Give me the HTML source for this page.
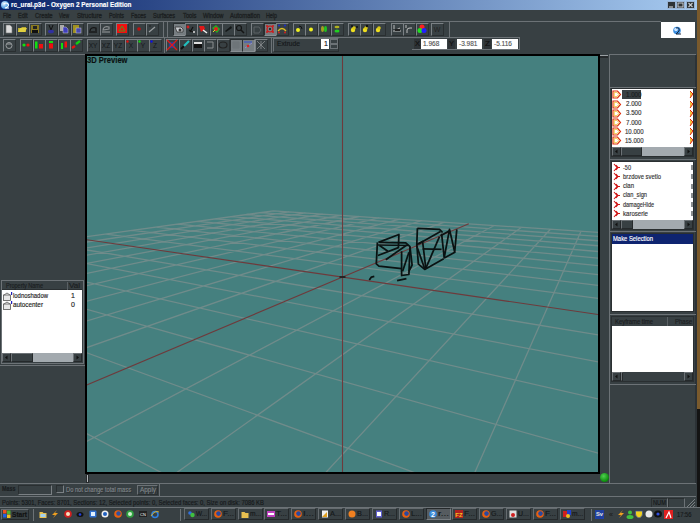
<!DOCTYPE html>
<html><head><meta charset="utf-8"><style>*{margin:0;padding:0;box-sizing:border-box}
html,body{width:700px;height:523px;overflow:hidden;background:#384043;font-family:"Liberation Sans",sans-serif;position:relative}
.a{position:absolute}
.t{position:absolute;white-space:nowrap;-webkit-text-stroke:0.15px currentColor}
.btn{position:absolute;width:13px;height:13px;border-left:1px solid #7a8084;border-top:1px solid #7a8084;border-right:1px solid #2a2f31;border-bottom:1px solid #2a2f31}
.pr{background:#767d81;border-left-color:#2a2f31;border-top-color:#2a2f31;border-right-color:#8a9094;border-bottom-color:#8a9094}
svg{overflow:visible}</style></head><body>
<div class="a" style="left:697px;top:0px;width:3px;height:409px;background:#7a5a2c;"></div>
<div class="a" style="left:697px;top:409px;width:3px;height:99px;background:#141414;"></div>
<div class="a" style="left:0px;top:0px;width:697px;height:10px;background:linear-gradient(90deg,#0a246a,#a6caf0);"></div>
<div class="a" style="left:1px;top:1px;width:8px;height:8px;background:radial-gradient(circle at 35% 35%,#e8f4ff,#4a9ae0 60%,#1a4a98);border-radius:50%"></div>
<svg class="a" style="left:1px;top:1px" width="9" height="9" viewBox="0 0 9 9"><path d="M3 3q2-2 4 0t-3 4h4" stroke="#fff" stroke-width="1.1" fill="none"/></svg>
<div class="t" style="left:10.5px;top:1.01px;font-size:7px;line-height:8px;font-weight:bold;color:#ffffff;transform:scaleX(0.908);transform-origin:0 0;">rc_ural.p3d - Oxygen 2 Personal Edition</div>
<div class="a" style="left:667px;top:1px;width:9px;height:8px;background:#2e3336;border:1px solid #9ab4d4"></div>
<div class="a" style="left:676px;top:1px;width:9px;height:8px;background:#2e3336;border:1px solid #9ab4d4"></div>
<div class="a" style="left:686px;top:1px;width:9px;height:8px;background:#2e3336;border:1px solid #9ab4d4"></div>
<svg class="a" style="left:667px;top:1px" width="9" height="8" viewBox="0 0 9 8"><path d="M2 6h4" stroke="#c8ccd0" stroke-width="1.2"/></svg>
<svg class="a" style="left:676px;top:1px" width="9" height="8" viewBox="0 0 9 8"><rect x="2" y="2" width="5" height="4" fill="none" stroke="#c8ccd0" stroke-width="1"/></svg>
<svg class="a" style="left:686px;top:1px" width="9" height="8" viewBox="0 0 9 8"><path d="M2.5 2l4 4M6.5 2l-4 4" stroke="#c8ccd0" stroke-width="1.1"/></svg>
<div class="t" style="left:3px;top:11.61px;font-size:7px;line-height:8px;color:#1c2022;transform:scaleX(0.709);transform-origin:0 0;-webkit-text-stroke:0.35px #1c2022">File</div>
<div class="t" style="left:18px;top:11.61px;font-size:7px;line-height:8px;color:#1c2022;transform:scaleX(0.788);transform-origin:0 0;-webkit-text-stroke:0.35px #1c2022">Edit</div>
<div class="t" style="left:34.5px;top:11.61px;font-size:7px;line-height:8px;color:#1c2022;transform:scaleX(0.833);transform-origin:0 0;-webkit-text-stroke:0.35px #1c2022">Create</div>
<div class="t" style="left:59px;top:11.61px;font-size:7px;line-height:8px;color:#1c2022;transform:scaleX(0.665);transform-origin:0 0;-webkit-text-stroke:0.35px #1c2022">View</div>
<div class="t" style="left:77px;top:11.61px;font-size:7px;line-height:8px;color:#1c2022;transform:scaleX(0.880);transform-origin:0 0;-webkit-text-stroke:0.35px #1c2022">Structure</div>
<div class="t" style="left:109px;top:11.61px;font-size:7px;line-height:8px;color:#1c2022;transform:scaleX(0.771);transform-origin:0 0;-webkit-text-stroke:0.35px #1c2022">Points</div>
<div class="t" style="left:131px;top:11.61px;font-size:7px;line-height:8px;color:#1c2022;transform:scaleX(0.787);transform-origin:0 0;-webkit-text-stroke:0.35px #1c2022">Faces</div>
<div class="t" style="left:153px;top:11.61px;font-size:7px;line-height:8px;color:#1c2022;transform:scaleX(0.796);transform-origin:0 0;-webkit-text-stroke:0.35px #1c2022">Surfaces</div>
<div class="t" style="left:182.5px;top:11.61px;font-size:7px;line-height:8px;color:#1c2022;transform:scaleX(0.826);transform-origin:0 0;-webkit-text-stroke:0.35px #1c2022">Tools</div>
<div class="t" style="left:202.5px;top:11.61px;font-size:7px;line-height:8px;color:#1c2022;transform:scaleX(0.823);transform-origin:0 0;-webkit-text-stroke:0.35px #1c2022">Window</div>
<div class="t" style="left:230px;top:11.61px;font-size:7px;line-height:8px;color:#1c2022;transform:scaleX(0.847);transform-origin:0 0;-webkit-text-stroke:0.35px #1c2022">Automation</div>
<div class="t" style="left:266px;top:11.61px;font-size:7px;line-height:8px;color:#1c2022;transform:scaleX(0.764);transform-origin:0 0;-webkit-text-stroke:0.35px #1c2022">Help</div>
<div class="a" style="left:0px;top:21px;width:661px;height:1px;background:#6c7276;"></div>
<div class="a" style="left:0px;top:37px;width:449px;height:1px;background:#6c7276;"></div>
<div class="a" style="left:449px;top:21px;width:1px;height:16px;background:#6c7276;"></div>
<div class="a" style="left:661px;top:22px;width:34px;height:16px;background:#ffffff;"></div>
<svg class="a" style="left:672px;top:25px" width="12" height="10" viewBox="0 0 12 10"><circle cx="5" cy="5.5" r="3.8" fill="#3b8ee0"/><circle cx="4" cy="4.5" r="1.8" fill="#cfe6ff"/><path d="M4 3q4-1 3 3l-3 3h5" stroke="#1a2a40" stroke-width="1" fill="none"/></svg>
<div class="a" style="left:0px;top:54px;width:86px;height:1px;background:#6c7276;"></div>
<div class="btn" style="left:3px;top:23px"></div>
<svg class="a" style="left:3px;top:23px" width="12" height="12" viewBox="0 0 12 12"><path d="M3 2h4l2 2v6H3z" fill="#dcdcdc" stroke="#777" stroke-width="0.6"/></svg>
<div class="btn" style="left:16px;top:23px"></div>
<svg class="a" style="left:16px;top:23px" width="12" height="12" viewBox="0 0 12 12"><path d="M2 5h3l1-1h4v5H2z" fill="#b8a830"/><path d="M2 9l2-4h7l-2 4z" fill="#e0d040"/></svg>
<div class="btn" style="left:29px;top:23px"></div>
<svg class="a" style="left:29px;top:23px" width="12" height="12" viewBox="0 0 12 12"><rect x="2" y="2" width="8" height="8" fill="#8a7a20"/><rect x="4" y="3" width="4" height="3" fill="#222"/><rect x="3" y="7" width="6" height="3" fill="#111"/></svg>
<div class="btn" style="left:45px;top:23px"></div>
<svg class="a" style="left:45px;top:23px" width="12" height="12" viewBox="0 0 12 12"><path d="M4 2l2 5 2-5" stroke="#111" stroke-width="1" fill="none"/><ellipse cx="6" cy="8.5" rx="3" ry="1.8" fill="#3030a0"/></svg>
<div class="btn" style="left:58px;top:23px"></div>
<svg class="a" style="left:58px;top:23px" width="12" height="12" viewBox="0 0 12 12"><rect x="2" y="2" width="4" height="6" fill="#aaa"/><path d="M5 4h3l2 2v4H5z" fill="#4040c0" stroke="#ccc" stroke-width="0.5"/></svg>
<div class="btn" style="left:71px;top:23px"></div>
<svg class="a" style="left:71px;top:23px" width="12" height="12" viewBox="0 0 12 12"><rect x="2" y="2" width="6" height="8" fill="#a09020"/><rect x="5" y="5" width="5" height="5" fill="#4848b0" stroke="#ccc" stroke-width="0.5"/></svg>
<div class="btn" style="left:87px;top:23px"></div>
<svg class="a" style="left:87px;top:23px" width="12" height="12" viewBox="0 0 12 12"><path d="M3 8c0-3 3-4 6-3v3" stroke="#151515" stroke-width="1.3" fill="none"/><path d="M2 9h8" stroke="#151515" stroke-width="1.3"/></svg>
<div class="btn" style="left:100px;top:23px"></div>
<svg class="a" style="left:100px;top:23px" width="12" height="12" viewBox="0 0 12 12"><path d="M9 4c-3-1-6 0-6 3l6-1z" stroke="#8a8e90" stroke-width="1.2" fill="none"/><path d="M2 9h8" stroke="#8a8e90" stroke-width="1.2"/></svg>
<div class="btn" style="left:116px;top:23px"></div>
<svg class="a" style="left:116px;top:23px" width="12" height="12" viewBox="0 0 12 12"><rect x="1" y="1" width="10" height="9" fill="#f01010"/><path d="M3 8l3-5 3 5z" stroke="#40a020" stroke-width="0.9" fill="none"/></svg>
<div class="btn" style="left:133px;top:23px"></div>
<svg class="a" style="left:133px;top:23px" width="12" height="12" viewBox="0 0 12 12"><circle cx="6" cy="6" r="1.8" fill="#c01010"/></svg>
<div class="btn" style="left:146px;top:23px"></div>
<svg class="a" style="left:146px;top:23px" width="12" height="12" viewBox="0 0 12 12"><path d="M3 9l6-5" stroke="#9a9ea0" stroke-width="1.2"/><path d="M3 3l2 0" stroke="#222" stroke-width="1"/></svg>
<div class="btn pr" style="left:173px;top:23px"></div>
<svg class="a" style="left:173px;top:23px" width="12" height="12" viewBox="0 0 12 12"><path d="M2 4h6l2 2v3H4z" fill="#c8ccd0" stroke="#333" stroke-width="0.8"/><circle cx="7" cy="7" r="1.5" fill="#333"/></svg>
<div class="btn" style="left:185px;top:23px"></div>
<svg class="a" style="left:185px;top:23px" width="12" height="12" viewBox="0 0 12 12"><circle cx="3" cy="4" r="1.4" fill="#d02020"/><path d="M4 7l4 2M8 4l-3 5" stroke="#111" stroke-width="1.2"/><circle cx="9" cy="9" r="1" fill="#ddd"/></svg>
<div class="btn" style="left:197px;top:23px"></div>
<svg class="a" style="left:197px;top:23px" width="12" height="12" viewBox="0 0 12 12"><path d="M2 3l5 0 1 3-4 3z" fill="#e01818"/><path d="M6 7l4 3" stroke="#eee" stroke-width="1.5"/></svg>
<div class="btn" style="left:210px;top:23px"></div>
<svg class="a" style="left:210px;top:23px" width="12" height="12" viewBox="0 0 12 12"><path d="M2 5l4-3 4 4-3 4z" fill="#20b020"/><circle cx="6" cy="6" r="2" fill="#e02020"/><path d="M3 9l2-2" stroke="#e0e020" stroke-width="1"/></svg>
<div class="btn" style="left:222px;top:23px"></div>
<svg class="a" style="left:222px;top:23px" width="12" height="12" viewBox="0 0 12 12"><path d="M3 8l6-5 1 2-6 4z" fill="#151819"/></svg>
<div class="btn" style="left:234px;top:23px"></div>
<svg class="a" style="left:234px;top:23px" width="12" height="12" viewBox="0 0 12 12"><circle cx="5" cy="5" r="2.5" stroke="#151515" stroke-width="1.2" fill="none"/><path d="M7 7l3 3" stroke="#151515" stroke-width="1.5"/></svg>
<div class="btn" style="left:251px;top:23px"></div>
<svg class="a" style="left:251px;top:23px" width="12" height="12" viewBox="0 0 12 12"><path d="M3 4h5l2 3-2 3H3z" stroke="#5a6064" stroke-width="1" fill="none"/></svg>
<div class="btn pr" style="left:264px;top:23px"></div>
<svg class="a" style="left:264px;top:23px" width="12" height="12" viewBox="0 0 12 12"><circle cx="6" cy="6" r="3" stroke="#d01818" stroke-width="1.2" fill="none"/><circle cx="3" cy="3" r="1" fill="#d01818"/><circle cx="9" cy="3" r="1" fill="#d01818"/><circle cx="3" cy="9" r="1" fill="#d01818"/><circle cx="9" cy="9" r="1" fill="#d01818"/><circle cx="6" cy="6" r="1" fill="#111"/></svg>
<div class="btn" style="left:276px;top:23px"></div>
<svg class="a" style="left:276px;top:23px" width="12" height="12" viewBox="0 0 12 12"><path d="M2 8q4-5 8 0" stroke="#e0c020" stroke-width="1.3" fill="none"/><circle cx="3" cy="2.5" r="1.1" fill="#2030c0"/><circle cx="9" cy="2.5" r="1.1" fill="#2030c0"/><circle cx="3" cy="9.5" r="1" fill="#d02020"/><circle cx="9" cy="9.5" r="1" fill="#d02020"/></svg>
<div class="btn" style="left:293px;top:23px"></div>
<svg class="a" style="left:293px;top:23px" width="12" height="12" viewBox="0 0 12 12"><circle cx="5" cy="7" r="2" fill="#f0f020"/><path d="M6 3q3 0 3 3" stroke="#111" stroke-width="1" fill="none"/></svg>
<div class="btn" style="left:305px;top:23px"></div>
<svg class="a" style="left:305px;top:23px" width="12" height="12" viewBox="0 0 12 12"><circle cx="6" cy="6.5" r="2" fill="#f0f020"/></svg>
<div class="btn" style="left:318px;top:23px"></div>
<svg class="a" style="left:318px;top:23px" width="12" height="12" viewBox="0 0 12 12"><ellipse cx="4.5" cy="6" rx="1.5" ry="3" fill="#a0a020"/><ellipse cx="7.5" cy="6" rx="1.5" ry="3" fill="#20c020"/></svg>
<div class="btn" style="left:331px;top:23px"></div>
<svg class="a" style="left:331px;top:23px" width="12" height="12" viewBox="0 0 12 12"><ellipse cx="6" cy="4" rx="2.5" ry="1.2" fill="#b0b020"/><ellipse cx="6" cy="8" rx="2.5" ry="1.5" fill="#20d020"/></svg>
<div class="btn" style="left:348px;top:23px"></div>
<svg class="a" style="left:348px;top:23px" width="12" height="12" viewBox="0 0 12 12"><circle cx="5" cy="7" r="2.2" fill="#f0e020"/><circle cx="6" cy="5" r="1.8" fill="#d8c818"/><circle cx="9" cy="4" r="1" fill="#111"/><circle cx="4" cy="3" r="1" fill="#111"/></svg>
<div class="btn" style="left:360px;top:23px"></div>
<svg class="a" style="left:360px;top:23px" width="12" height="12" viewBox="0 0 12 12"><circle cx="5" cy="7" r="2.2" fill="#f0e020"/><circle cx="6" cy="5" r="1.8" fill="#d8c818"/><circle cx="7" cy="3" r="1.2" fill="#111"/></svg>
<div class="btn" style="left:373px;top:23px"></div>
<svg class="a" style="left:373px;top:23px" width="12" height="12" viewBox="0 0 12 12"><circle cx="5" cy="7" r="2.2" fill="#f0e020"/><circle cx="6" cy="5" r="1.8" fill="#d8c818"/></svg>
<div class="btn" style="left:391px;top:23px"></div>
<svg class="a" style="left:391px;top:23px" width="12" height="12" viewBox="0 0 12 12"><path d="M3 2v4M2 8h8M5 7l4-2" stroke="#ccc" stroke-width="0.9"/><rect x="4" y="6" width="5" height="2" fill="#222"/></svg>
<div class="btn" style="left:403px;top:23px"></div>
<svg class="a" style="left:403px;top:23px" width="12" height="12" viewBox="0 0 12 12"><path d="M3 2v3M4 10v-3q0-2 3-2h2" stroke="#ccc" stroke-width="0.9" fill="none"/></svg>
<div class="btn" style="left:416px;top:23px"></div>
<svg class="a" style="left:416px;top:23px" width="12" height="12" viewBox="0 0 12 12"><circle cx="6" cy="4" r="2.5" fill="#ff2020"/><circle cx="4" cy="7.5" r="2.5" fill="#20e020"/><circle cx="8" cy="7.5" r="2.5" fill="#2020ff"/></svg>
<div class="btn" style="left:431px;top:23px"></div>
<svg class="a" style="left:431px;top:23px" width="12" height="12" viewBox="0 0 12 12"><text x="6" y="9" font-size="7" text-anchor="middle" fill="#222" font-family="Liberation Sans">W</text></svg>
<div class="btn" style="left:3px;top:39px"></div>
<svg class="a" style="left:3px;top:39px" width="12" height="12" viewBox="0 0 12 12"><circle cx="6" cy="6.5" r="3" stroke="#9a9ea0" stroke-width="1" fill="none"/><path d="M4 5h4" stroke="#9a9ea0" stroke-width="1"/></svg>
<div class="btn" style="left:20px;top:39px"></div>
<svg class="a" style="left:20px;top:39px" width="12" height="12" viewBox="0 0 12 12"><circle cx="4" cy="6" r="1.6" fill="#10e010"/><circle cx="8" cy="6" r="1.6" fill="#f01010"/></svg>
<div class="btn" style="left:33px;top:39px"></div>
<svg class="a" style="left:33px;top:39px" width="12" height="12" viewBox="0 0 12 12"><rect x="2" y="2.5" width="2.5" height="7" fill="#10e010"/><rect x="6" y="5" width="4" height="4.5" fill="#f01010"/></svg>
<div class="btn" style="left:45px;top:39px"></div>
<svg class="a" style="left:45px;top:39px" width="12" height="12" viewBox="0 0 12 12"><rect x="4" y="2" width="4" height="2" fill="#10e010"/><rect x="4" y="4.5" width="4" height="5" fill="#f01010"/></svg>
<div class="btn" style="left:58px;top:39px"></div>
<svg class="a" style="left:58px;top:39px" width="12" height="12" viewBox="0 0 12 12"><rect x="3" y="4" width="2" height="6" fill="#10e010"/><rect x="6.5" y="2.5" width="2.5" height="6" fill="#f01010"/></svg>
<div class="btn" style="left:70px;top:39px"></div>
<svg class="a" style="left:70px;top:39px" width="12" height="12" viewBox="0 0 12 12"><path d="M6 5l4-3" stroke="#10d010" stroke-width="2.2"/><path d="M2 9l3-2" stroke="#f01010" stroke-width="2.2"/></svg>
<div class="btn" style="left:87px;top:39px"></div>
<svg class="a" style="left:87px;top:39px" width="12" height="12" viewBox="0 0 12 12"><text x="6" y="9" font-size="6.5" text-anchor="middle" fill="#15181a" font-family="Liberation Sans">XY</text></svg>
<div class="btn" style="left:100px;top:39px"></div>
<svg class="a" style="left:100px;top:39px" width="12" height="12" viewBox="0 0 12 12"><text x="6" y="9" font-size="6.5" text-anchor="middle" fill="#15181a" font-family="Liberation Sans">XZ</text></svg>
<div class="btn" style="left:112px;top:39px"></div>
<svg class="a" style="left:112px;top:39px" width="12" height="12" viewBox="0 0 12 12"><text x="6" y="9" font-size="6.5" text-anchor="middle" fill="#15181a" font-family="Liberation Sans">YZ</text></svg>
<div class="btn" style="left:125px;top:39px"></div>
<svg class="a" style="left:125px;top:39px" width="12" height="12" viewBox="0 0 12 12"><text x="6" y="9" font-size="6.5" text-anchor="middle" fill="#15181a" font-family="Liberation Sans">X</text><circle cx="2.5" cy="2.5" r="1.2" fill="#e01010"/></svg>
<div class="btn" style="left:137px;top:39px"></div>
<svg class="a" style="left:137px;top:39px" width="12" height="12" viewBox="0 0 12 12"><text x="6" y="9" font-size="6.5" text-anchor="middle" fill="#15181a" font-family="Liberation Sans">Y</text><circle cx="2.5" cy="2.5" r="1.2" fill="#10d010"/></svg>
<div class="btn" style="left:149px;top:39px"></div>
<svg class="a" style="left:149px;top:39px" width="12" height="12" viewBox="0 0 12 12"><text x="6" y="9" font-size="6.5" text-anchor="middle" fill="#15181a" font-family="Liberation Sans">Z</text><circle cx="2.5" cy="2.5" r="1.2" fill="#1010e0"/></svg>
<div class="btn" style="left:166px;top:39px"></div>
<svg class="a" style="left:166px;top:39px" width="12" height="12" viewBox="0 0 12 12"><rect x="3" y="3" width="6" height="6" fill="#2040a0"/><path d="M1 1l10 10M11 1L1 11" stroke="#e01818" stroke-width="1.3"/></svg>
<div class="btn" style="left:179px;top:39px"></div>
<svg class="a" style="left:179px;top:39px" width="12" height="12" viewBox="0 0 12 12"><path d="M2 10l3-3" stroke="#111" stroke-width="2"/><path d="M5 7l5-5" stroke="#20c0c0" stroke-width="2.2"/></svg>
<div class="btn" style="left:192px;top:39px"></div>
<svg class="a" style="left:192px;top:39px" width="12" height="12" viewBox="0 0 12 12"><rect x="2" y="3" width="8" height="2" fill="#ddd"/><rect x="2" y="5" width="8" height="4" fill="#111"/></svg>
<div class="btn" style="left:204px;top:39px"></div>
<svg class="a" style="left:204px;top:39px" width="12" height="12" viewBox="0 0 12 12"><path d="M3 3h6v6H3" stroke="#8a8e90" stroke-width="1" fill="none"/></svg>
<div class="btn" style="left:217px;top:39px"></div>
<svg class="a" style="left:217px;top:39px" width="12" height="12" viewBox="0 0 12 12"><ellipse cx="6" cy="6" rx="4" ry="3" stroke="#222" stroke-width="1.2" fill="none"/></svg>
<div class="btn pr" style="left:230px;top:39px"></div>
<svg class="a" style="left:230px;top:39px" width="12" height="12" viewBox="0 0 12 12"><path d="M2 4h8M2 6h8M2 8h8M4 2v8M6 2v8M8 2v8" stroke="#6a7074" stroke-width="0.6"/></svg>
<div class="btn pr" style="left:242px;top:39px"></div>
<svg class="a" style="left:242px;top:39px" width="12" height="12" viewBox="0 0 12 12"><path d="M2 3h8" stroke="#3050d0" stroke-width="1"/><path d="M3 9l7-5" stroke="#8a8ad0" stroke-width="1"/><circle cx="6" cy="7" r="1.3" fill="#e02020"/></svg>
<div class="btn" style="left:255px;top:39px"></div>
<svg class="a" style="left:255px;top:39px" width="12" height="12" viewBox="0 0 12 12"><path d="M2 2l8 8M10 2L2 10M6 2v8" stroke="#8a8e90" stroke-width="0.8"/></svg>
<div class="a" style="left:163px;top:22px;width:1px;height:15px;background:#6c7276;"></div>
<div class="a" style="left:167px;top:22px;width:1px;height:15px;background:#6c7276;"></div>
<div class="a" style="left:164px;top:38px;width:1px;height:15px;background:#6c7276;"></div>
<div class="a" style="left:271px;top:38px;width:1px;height:15px;background:#6c7276;"></div>
<div class="a" style="left:273px;top:38px;width:66px;height:14px;border:1px solid #6c7276;border-right-color:#2a2f31;border-bottom-color:#2a2f31"></div>
<div class="t" style="left:277px;top:39.61px;font-size:7px;line-height:8px;color:#15181a;transform:scaleX(0.953);transform-origin:0 0;">Extrude</div>
<div class="a" style="left:321px;top:39px;width:8px;height:10px;background:#ffffff;"></div>
<div class="t" style="left:324px;top:39.61px;font-size:7px;line-height:8px;color:#111;">1</div>
<div class="a" style="left:330px;top:39px;width:8px;height:5px;background:#384043;border:1px solid #6c7276"></div>
<div class="a" style="left:330px;top:44px;width:8px;height:5px;background:#384043;border:1px solid #6c7276"></div>
<div class="a" style="left:412px;top:37px;width:108px;height:13px;border:1px solid #6c7276;border-left:none"></div>
<div class="a" style="left:414px;top:39px;width:7px;height:10px;background:#2e3336;"></div>
<div class="t" style="left:415px;top:39.61px;font-size:7px;line-height:8px;color:#111;transform:scaleX(1.071);transform-origin:0 0;">X</div>
<div class="a" style="left:421px;top:39px;width:26px;height:10px;background:#ffffff;"></div>
<div class="t" style="left:423px;top:39.68px;font-size:6.5px;line-height:7.5px;color:#555;">1.968</div>
<div class="a" style="left:448px;top:39px;width:7px;height:10px;background:#2e3336;"></div>
<div class="t" style="left:449px;top:39.61px;font-size:7px;line-height:8px;color:#111;transform:scaleX(1.071);transform-origin:0 0;">Y</div>
<div class="a" style="left:457px;top:39px;width:25px;height:10px;background:#ffffff;"></div>
<div class="t" style="left:459px;top:39.68px;font-size:6.5px;line-height:7.5px;color:#555;">-3.981</div>
<div class="a" style="left:484px;top:39px;width:7px;height:10px;background:#2e3336;"></div>
<div class="t" style="left:485px;top:39.61px;font-size:7px;line-height:8px;color:#111;transform:scaleX(1.169);transform-origin:0 0;">Z</div>
<div class="a" style="left:492px;top:39px;width:26px;height:10px;background:#ffffff;"></div>
<div class="t" style="left:494px;top:39.68px;font-size:6.5px;line-height:7.5px;color:#555;">-5.116</div>
<div class="a" style="left:85px;top:54px;width:515px;height:420px;background:#000;"></div>
<div class="a" style="left:87px;top:56px;width:511px;height:416px;background:#45807f;overflow:hidden">
<svg width="511" height="416" class="a" style="left:0;top:0">
<path d="M-5360.7 3665.8L-759.8 286.3M9263.0 3665.8L726.9 190.8M-2444.6 3665.8L-601.8 264.3M7545.4 3665.8L680.9 187.7M471.4 3665.8L-478.5 247.2M5827.7 3665.8L638.2 184.9M3387.4 3665.8L-379.5 233.4M4110.0 3665.8L598.4 182.2M6303.5 3665.8L-298.3 222.2M2392.3 3665.8L561.3 179.7M9219.5 3665.8L-230.5 212.7M674.7 3665.8L526.5 177.4M2847.8 1054.2L-173.0 204.8M-1043.0 3665.8L494.0 175.3M1855.4 650.2L-123.7 197.9M-2760.7 3665.8L463.4 173.2M1456.9 487.9L-80.9 192.0M-4478.4 3665.8L434.6 171.3M1241.9 400.4L-43.4 186.8M-3204.0 2081.6L407.4 169.5M1015.4 308.2L19.2 178.1M-1466.2 805.1L357.5 166.2M948.4 280.9L45.5 174.4M-1234.3 634.8L334.5 164.7M897.5 260.2L69.3 171.1M-1093.4 531.3L312.7 163.2M857.5 243.9L90.8 168.1M-998.8 461.8L292.0 161.8M825.2 230.8L110.4 165.4M-930.9 411.9L272.3 160.5M798.6 220.0L128.2 162.9M-879.8 374.4L253.5 159.3M776.3 210.9L144.6 160.6M-839.9 345.1L235.6 158.1M757.4 203.2L159.7 158.5M-807.9 321.6L218.5 156.9M741.1 196.5L173.6 156.6M-781.7 302.3L202.2 155.9M726.9 190.8L186.5 154.8M-759.8 286.3L186.5 154.8" stroke="#a49898" stroke-width="1.3" fill="none" opacity="0.45"/>
<path d="M1107.5 345.7L-10.3 182.2M-1919.8 1138.3L381.8 167.8" stroke="#6e3a3c" stroke-width="1.1" fill="none"/>
<line x1="255.5" y1="0" x2="255.5" y2="416" stroke="#6e3a3c" stroke-width="1.1"/>
<path d="M252.5 221h6" stroke="#101818" stroke-width="1.5"/>
<g stroke="#0a1212" stroke-width="1.75" fill="none" stroke-linejoin="round"><polyline points="291.4,186.4 311.9,178.5 311.4,191.6 290.9,199.5"/><polyline points="290.4,189.0 321.4,189.5"/><polyline points="292.5,189.5 300.9,195.3"/><polyline points="290.4,186.4 289.3,207.9 291.9,210.1 314.6,212.7"/><polyline points="314.6,195.3 314.6,219.5 321.9,218.5 323.0,190.6 318.8,186.9 292.5,186.4"/><polyline points="298.8,203.7 319.8,189.0"/><polyline points="323.0,191.1 325.1,209.0 321.9,215.3"/><polyline points="315.6,215.3 321.9,196.4"/><polyline points="330.4,172.3 352.5,173.4 355.6,176.5"/><polyline points="330.4,172.3 329.8,188.6 331.4,208.1 337.7,213.4 356.7,202.8"/><polyline points="329.8,188.6 335.6,185.5 338.8,212.3"/><polyline points="329.8,190.2 337.7,212.8"/><polyline points="331.4,188.1 353.5,175.5"/><polyline points="335.6,192.8 354.6,193.4"/><polyline points="338.8,212.3 352.5,180.7"/><polyline points="354.6,177.6 357.2,201.8 362.5,173.4 367.7,196.0 369.8,173.4"/><polyline points="357.7,201.8 368.3,196.0"/><polyline points="353.5,179.7 363.0,174.4"/><polyline points="282.3,224.0 284.4,221.1 287.3,220.4"/><polyline points="310.1,224.7 319.4,222.6"/></g>
</svg></div>
<div class="t" style="left:87.3px;top:55.72px;font-size:8.5px;line-height:9.5px;font-weight:bold;color:#0a1010;transform:scaleX(0.893);transform-origin:0 0;">3D Preview</div>
<div class="a" style="left:600px;top:55px;width:8px;height:3px;background:#25292b;"></div>
<div class="a" style="left:600px;top:55px;width:8px;height:1px;background:#9aa0a4;"></div>
<div class="a" style="left:86px;top:474px;width:3px;height:9px;background:#25292b;"></div>
<div class="a" style="left:87px;top:475px;width:1px;height:7px;background:#b0b4b8;"></div>
<div class="a" style="left:1px;top:280px;width:83px;height:84px;border:1px solid #6c7276"></div>
<div class="a" style="left:2px;top:282px;width:80px;height:8px;background:#384043;border-bottom:1px solid #2a2f31"></div>
<div class="a" style="left:67px;top:282px;width:1px;height:8px;background:#5a6064;"></div>
<div class="t" style="left:6px;top:281.61px;font-size:7px;line-height:8px;color:#1a1d1f;transform:scaleX(0.786);transform-origin:0 0;">Property Name</div>
<div class="t" style="left:69px;top:281.61px;font-size:7px;line-height:8px;color:#1a1d1f;transform:scaleX(1.146);transform-origin:0 0;">Val</div>
<div class="a" style="left:2px;top:290px;width:80px;height:63px;background:#ffffff;"></div>
<svg class="a" style="left:3px;top:292.0px" width="9" height="9" viewBox="0 0 9 9"><rect x="0.5" y="3" width="7" height="5.5" fill="#e8e8e8" stroke="#555" stroke-width="0.8"/><path d="M1 3l3-2 3 2" stroke="#555" stroke-width="0.8" fill="none"/><rect x="8" y="0" width="1.2" height="3" fill="#2020c0"/></svg>
<div class="t" style="left:13px;top:292.21px;font-size:7px;line-height:8px;color:#222;transform:scaleX(0.848);transform-origin:0 0;">lodnoshadow</div>
<div class="t" style="left:71px;top:292.21px;font-size:7px;line-height:8px;color:#222;">1</div>
<svg class="a" style="left:3px;top:301.0px" width="9" height="9" viewBox="0 0 9 9"><rect x="0.5" y="3" width="7" height="5.5" fill="#e8e8e8" stroke="#555" stroke-width="0.8"/><path d="M1 3l3-2 3 2" stroke="#555" stroke-width="0.8" fill="none"/><rect x="8" y="0" width="1.2" height="3" fill="#2020c0"/></svg>
<div class="t" style="left:13px;top:301.21px;font-size:7px;line-height:8px;color:#222;transform:scaleX(0.907);transform-origin:0 0;">autocenter</div>
<div class="t" style="left:71px;top:301.21px;font-size:7px;line-height:8px;color:#222;">0</div>
<div class="a" style="left:2px;top:353px;width:80px;height:9px;background:#a3aaaf;"></div>
<div class="a" style="left:2px;top:353px;width:9px;height:9px;background:#384043;border:1px solid #6c7276;border-right-color:#25292b;border-bottom-color:#25292b"></div>
<svg class="a" style="left:2px;top:353px" width="9" height="9" viewBox="0 0 9 9"><path d="M5.5 2.5L3 4.5 5.5 6.5z" fill="#111"/></svg>
<div class="a" style="left:11px;top:353px;width:22px;height:9px;background:#384043;border:1px solid #6c7276;border-right-color:#25292b;border-bottom-color:#25292b"></div>
<div class="a" style="left:73px;top:353px;width:9px;height:9px;background:#384043;border:1px solid #6c7276;border-right-color:#25292b;border-bottom-color:#25292b"></div>
<svg class="a" style="left:73px;top:353px" width="9" height="9" viewBox="0 0 9 9"><path d="M3.5 2.5L6 4.5 3.5 6.5z" fill="#111"/></svg>
<div class="a" style="left:0px;top:365px;width:85px;height:1px;background:#6c7276;"></div>
<div class="a" style="left:609px;top:54px;width:1px;height:429px;background:#6c7276;"></div>
<div class="a" style="left:695px;top:55px;width:2px;height:428px;background:#2c3236;"></div>
<div class="a" style="left:610px;top:54px;width:86px;height:1px;background:#6c7276;"></div>
<div class="a" style="left:610px;top:87px;width:86px;height:1px;background:#6c7276;"></div>
<div class="a" style="left:611px;top:88px;width:83px;height:69px;background:#2a2f31;"></div>
<div class="a" style="left:612px;top:89px;width:81px;height:58px;background:#ffffff;"></div>
<svg class="a" style="left:612px;top:90.3px" width="10" height="9" viewBox="0 0 10 9"><path d="M1 1h4.5l3 3.5-3 3.5H1z" fill="#fff" stroke="#e03010" stroke-width="1.2"/><path d="M2.2 2.3h2.6l2 2.2-2 2.2H2.2z" fill="none" stroke="#f0c030" stroke-width="0.9"/></svg>
<svg class="a" style="left:690px;top:90.3px" width="3" height="9" viewBox="0 0 3 9"><path d="M0 1l3 3-3 4" fill="#f0c040" stroke="#e02010" stroke-width="1"/></svg>
<div class="a" style="left:622px;top:90px;width:19px;height:9px;background:#384043;"></div>
<div class="t" style="left:625.7px;top:90.91px;font-size:7px;line-height:8px;color:#1a1d1f;transform:scaleX(0.885);transform-origin:0 0;">1.000</div>
<svg class="a" style="left:612px;top:99.5px" width="10" height="9" viewBox="0 0 10 9"><path d="M1 1h4.5l3 3.5-3 3.5H1z" fill="#fff" stroke="#e03010" stroke-width="1.2"/><path d="M2.2 2.3h2.6l2 2.2-2 2.2H2.2z" fill="none" stroke="#f0c030" stroke-width="0.9"/></svg>
<svg class="a" style="left:690px;top:99.5px" width="3" height="9" viewBox="0 0 3 9"><path d="M0 1l3 3-3 4" fill="#f0c040" stroke="#e02010" stroke-width="1"/></svg>
<div class="t" style="left:625.7px;top:100.11px;font-size:7px;line-height:8px;color:#333;transform:scaleX(0.885);transform-origin:0 0;">2.000</div>
<svg class="a" style="left:612px;top:108.69999999999999px" width="10" height="9" viewBox="0 0 10 9"><path d="M1 1h4.5l3 3.5-3 3.5H1z" fill="#fff" stroke="#e03010" stroke-width="1.2"/><path d="M2.2 2.3h2.6l2 2.2-2 2.2H2.2z" fill="none" stroke="#f0c030" stroke-width="0.9"/></svg>
<svg class="a" style="left:690px;top:108.69999999999999px" width="3" height="9" viewBox="0 0 3 9"><path d="M0 1l3 3-3 4" fill="#f0c040" stroke="#e02010" stroke-width="1"/></svg>
<div class="t" style="left:625.7px;top:109.31px;font-size:7px;line-height:8px;color:#333;transform:scaleX(0.885);transform-origin:0 0;">3.500</div>
<svg class="a" style="left:612px;top:117.89999999999999px" width="10" height="9" viewBox="0 0 10 9"><path d="M1 1h4.5l3 3.5-3 3.5H1z" fill="#fff" stroke="#e03010" stroke-width="1.2"/><path d="M2.2 2.3h2.6l2 2.2-2 2.2H2.2z" fill="none" stroke="#f0c030" stroke-width="0.9"/></svg>
<svg class="a" style="left:690px;top:117.89999999999999px" width="3" height="9" viewBox="0 0 3 9"><path d="M0 1l3 3-3 4" fill="#f0c040" stroke="#e02010" stroke-width="1"/></svg>
<div class="t" style="left:625.7px;top:118.51px;font-size:7px;line-height:8px;color:#333;transform:scaleX(0.885);transform-origin:0 0;">7.000</div>
<svg class="a" style="left:612px;top:127.1px" width="10" height="9" viewBox="0 0 10 9"><path d="M1 1h4.5l3 3.5-3 3.5H1z" fill="#fff" stroke="#e03010" stroke-width="1.2"/><path d="M2.2 2.3h2.6l2 2.2-2 2.2H2.2z" fill="none" stroke="#f0c030" stroke-width="0.9"/></svg>
<svg class="a" style="left:690px;top:127.1px" width="3" height="9" viewBox="0 0 3 9"><path d="M0 1l3 3-3 4" fill="#f0c040" stroke="#e02010" stroke-width="1"/></svg>
<div class="t" style="left:624.5px;top:127.71px;font-size:7px;line-height:8px;color:#333;transform:scaleX(0.864);transform-origin:0 0;">10.000</div>
<svg class="a" style="left:612px;top:136.3px" width="10" height="9" viewBox="0 0 10 9"><path d="M1 1h4.5l3 3.5-3 3.5H1z" fill="#fff" stroke="#e03010" stroke-width="1.2"/><path d="M2.2 2.3h2.6l2 2.2-2 2.2H2.2z" fill="none" stroke="#f0c030" stroke-width="0.9"/></svg>
<svg class="a" style="left:690px;top:136.3px" width="3" height="9" viewBox="0 0 3 9"><path d="M0 1l3 3-3 4" fill="#f0c040" stroke="#e02010" stroke-width="1"/></svg>
<div class="t" style="left:624.5px;top:136.91px;font-size:7px;line-height:8px;color:#333;transform:scaleX(0.864);transform-origin:0 0;">15.000</div>
<div class="a" style="left:612px;top:147px;width:81px;height:9px;background:#a3aaaf;"></div>
<div class="a" style="left:612px;top:147px;width:9px;height:9px;background:#384043;border:1px solid #6c7276;border-right-color:#25292b;border-bottom-color:#25292b"></div>
<svg class="a" style="left:612px;top:147px" width="9" height="9" viewBox="0 0 9 9"><path d="M5.5 2.5L3 4.5 5.5 6.5z" fill="#111"/></svg>
<div class="a" style="left:621px;top:147px;width:21px;height:9px;background:#384043;border:1px solid #6c7276;border-right-color:#25292b;border-bottom-color:#25292b"></div>
<div class="a" style="left:684px;top:147px;width:9px;height:9px;background:#384043;border:1px solid #6c7276;border-right-color:#25292b;border-bottom-color:#25292b"></div>
<svg class="a" style="left:684px;top:147px" width="9" height="9" viewBox="0 0 9 9"><path d="M3.5 2.5L6 4.5 3.5 6.5z" fill="#111"/></svg>
<div class="a" style="left:610px;top:159px;width:86px;height:1px;background:#6c7276;"></div>
<div class="a" style="left:611px;top:161px;width:83px;height:69px;background:#2a2f31;"></div>
<div class="a" style="left:612px;top:162px;width:81px;height:58px;background:#ffffff;"></div>
<svg class="a" style="left:612px;top:163.0px" width="10" height="9" viewBox="0 0 10 9"><path d="M2 1l3 3.5L2 8M5 4.5h3M4 2l2 2.5-2 2.5" stroke="#d01818" stroke-width="1.1" fill="none"/></svg>
<div class="a" style="left:691px;top:165.0px;width:2px;height:5px;background:#8a8e90;"></div>
<div class="t" style="left:623px;top:163.61px;font-size:7px;line-height:8px;color:#333;transform:scaleX(0.791);transform-origin:0 0;">-50</div>
<svg class="a" style="left:612px;top:172.25px" width="10" height="9" viewBox="0 0 10 9"><path d="M2 1l3 3.5L2 8M5 4.5h3M4 2l2 2.5-2 2.5" stroke="#d01818" stroke-width="1.1" fill="none"/></svg>
<div class="a" style="left:691px;top:174.25px;width:2px;height:5px;background:#8a8e90;"></div>
<div class="t" style="left:623px;top:172.86px;font-size:7px;line-height:8px;color:#333;transform:scaleX(0.842);transform-origin:0 0;">brzdove svetlo</div>
<svg class="a" style="left:612px;top:181.5px" width="10" height="9" viewBox="0 0 10 9"><path d="M2 1l3 3.5L2 8M5 4.5h3M4 2l2 2.5-2 2.5" stroke="#d01818" stroke-width="1.1" fill="none"/></svg>
<div class="a" style="left:691px;top:183.5px;width:2px;height:5px;background:#8a8e90;"></div>
<div class="t" style="left:623px;top:182.11px;font-size:7px;line-height:8px;color:#333;transform:scaleX(0.857);transform-origin:0 0;">clan</div>
<svg class="a" style="left:612px;top:190.75px" width="10" height="9" viewBox="0 0 10 9"><path d="M2 1l3 3.5L2 8M5 4.5h3M4 2l2 2.5-2 2.5" stroke="#d01818" stroke-width="1.1" fill="none"/></svg>
<div class="a" style="left:691px;top:192.75px;width:2px;height:5px;background:#8a8e90;"></div>
<div class="t" style="left:623px;top:191.36px;font-size:7px;line-height:8px;color:#333;transform:scaleX(0.811);transform-origin:0 0;">clan_sign</div>
<svg class="a" style="left:612px;top:200.0px" width="10" height="9" viewBox="0 0 10 9"><path d="M2 1l3 3.5L2 8M5 4.5h3M4 2l2 2.5-2 2.5" stroke="#d01818" stroke-width="1.1" fill="none"/></svg>
<div class="a" style="left:691px;top:202.0px;width:2px;height:5px;background:#8a8e90;"></div>
<div class="t" style="left:623px;top:200.61px;font-size:7px;line-height:8px;color:#333;transform:scaleX(0.781);transform-origin:0 0;">damageHide</div>
<svg class="a" style="left:612px;top:209.25px" width="10" height="9" viewBox="0 0 10 9"><path d="M2 1l3 3.5L2 8M5 4.5h3M4 2l2 2.5-2 2.5" stroke="#d01818" stroke-width="1.1" fill="none"/></svg>
<div class="a" style="left:691px;top:211.25px;width:2px;height:5px;background:#8a8e90;"></div>
<div class="t" style="left:623px;top:209.86px;font-size:7px;line-height:8px;color:#333;transform:scaleX(0.868);transform-origin:0 0;">karoserie</div>
<div class="a" style="left:612px;top:220px;width:81px;height:9px;background:#a3aaaf;"></div>
<div class="a" style="left:612px;top:220px;width:9px;height:9px;background:#384043;border:1px solid #6c7276;border-right-color:#25292b;border-bottom-color:#25292b"></div>
<svg class="a" style="left:612px;top:220px" width="9" height="9" viewBox="0 0 9 9"><path d="M5.5 2.5L3 4.5 5.5 6.5z" fill="#111"/></svg>
<div class="a" style="left:621px;top:220px;width:12px;height:9px;background:#384043;border:1px solid #6c7276;border-right-color:#25292b;border-bottom-color:#25292b"></div>
<div class="a" style="left:684px;top:220px;width:9px;height:9px;background:#384043;border:1px solid #6c7276;border-right-color:#25292b;border-bottom-color:#25292b"></div>
<svg class="a" style="left:684px;top:220px" width="9" height="9" viewBox="0 0 9 9"><path d="M3.5 2.5L6 4.5 3.5 6.5z" fill="#111"/></svg>
<div class="a" style="left:610px;top:231px;width:86px;height:1px;background:#6c7276;"></div>
<div class="a" style="left:611px;top:233px;width:83px;height:79px;background:#2a2f31;"></div>
<div class="a" style="left:612px;top:234px;width:81px;height:10px;background:#0e2470;"></div>
<div class="t" style="left:613px;top:234.61px;font-size:7px;line-height:8px;color:#ffffff;transform:scaleX(0.836);transform-origin:0 0;">Make Selection</div>
<div class="a" style="left:612px;top:244px;width:81px;height:67px;background:#ffffff;"></div>
<div class="a" style="left:610px;top:314px;width:86px;height:1px;background:#6c7276;"></div>
<div class="a" style="left:611px;top:316px;width:83px;height:66px;background:#2a2f31;"></div>
<div class="a" style="left:612px;top:317px;width:81px;height:9px;background:#384043;"></div>
<div class="a" style="left:667px;top:317px;width:1px;height:9px;background:#5a6064;"></div>
<div class="t" style="left:615px;top:317.61px;font-size:7px;line-height:8px;color:#1a1d1f;transform:scaleX(0.842);transform-origin:0 0;">Keyframe time</div>
<div class="t" style="left:675px;top:317.61px;font-size:7px;line-height:8px;color:#1a1d1f;transform:scaleX(0.857);transform-origin:0 0;">Phase</div>
<div class="a" style="left:612px;top:326px;width:81px;height:46px;background:#ffffff;"></div>
<div class="a" style="left:612px;top:372px;width:81px;height:9px;background:#384043;"></div>
<div class="a" style="left:612px;top:372px;width:9px;height:9px;background:#384043;border:1px solid #6c7276;border-right-color:#25292b;border-bottom-color:#25292b"></div>
<svg class="a" style="left:612px;top:372px" width="9" height="9" viewBox="0 0 9 9"><path d="M5.5 2.5L3 4.5 5.5 6.5z" fill="#111"/></svg>
<div class="a" style="left:621px;top:372px;width:0px;height:9px;background:#384043;border:1px solid #6c7276;border-right-color:#25292b;border-bottom-color:#25292b"></div>
<div class="a" style="left:684px;top:372px;width:9px;height:9px;background:#384043;border:1px solid #6c7276;border-right-color:#25292b;border-bottom-color:#25292b"></div>
<svg class="a" style="left:684px;top:372px" width="9" height="9" viewBox="0 0 9 9"><path d="M3.5 2.5L6 4.5 3.5 6.5z" fill="#111"/></svg>
<div class="a" style="left:610px;top:384px;width:86px;height:1px;background:#6c7276;"></div>
<div class="a" style="left:600px;top:473px;width:9px;height:9px;background:radial-gradient(circle at 40% 35%,#50d050,#0a8a0a 70%);border-radius:50%"></div>
<div class="a" style="left:0px;top:483px;width:696px;height:1px;background:#6c7276;"></div>
<div class="t" style="left:2px;top:485.11px;font-size:7px;line-height:8px;font-weight:bold;color:#1a1d1f;transform:scaleX(0.771);transform-origin:0 0;">Mass</div>
<div class="a" style="left:18px;top:485px;width:34px;height:10px;background:#384043;border-top:1px solid #2a2f31;border-left:1px solid #2a2f31;border-right:1px solid #7a8084;border-bottom:1px solid #7a8084"></div>
<div class="a" style="left:56px;top:485px;width:8px;height:8px;border-top:1px solid #2a2f31;border-left:1px solid #2a2f31;border-right:1px solid #7a8084;border-bottom:1px solid #7a8084"></div>
<div class="t" style="left:66px;top:485.61px;font-size:7px;line-height:8px;color:#80868a;transform:scaleX(0.819);transform-origin:0 0;text-shadow:1px 1px 0 #2a2f31">Do not change total mass</div>
<div class="a" style="left:137px;top:485px;width:21px;height:10px;border:1px solid #6c7276;border-right-color:#2a2f31;border-bottom-color:#2a2f31"></div>
<div class="t" style="left:140px;top:485.61px;font-size:7px;line-height:8px;color:#80868a;transform:scaleX(0.914);transform-origin:0 0;text-shadow:1px 1px 0 #2a2f31">Apply</div>
<div class="a" style="left:159px;top:484px;width:1px;height:12px;background:#6c7276;"></div>
<div class="a" style="left:0px;top:496px;width:696px;height:1px;background:#6c7276;"></div>
<div class="t" style="left:2px;top:499.11px;font-size:7px;line-height:8px;color:#15181a;transform:scaleX(0.836);transform-origin:0 0;">Points: 5301, Faces: 8701, Sections: 12, Selected points: 0, Selected faces: 0, Size on disk: 7086 KB</div>
<div class="a" style="left:651px;top:498px;width:17px;height:9px;border-top:1px solid #2a2f31;border-left:1px solid #2a2f31;border-right:1px solid #6c7276"></div>
<div class="t" style="left:653px;top:498.61px;font-size:7px;line-height:8px;color:#15181a;transform:scaleX(0.815);transform-origin:0 0;">NUM</div>
<div class="a" style="left:668px;top:498px;width:17px;height:9px;border-top:1px solid #2a2f31;border-left:1px solid #2a2f31;border-right:1px solid #6c7276"></div>
<svg class="a" style="left:686px;top:498px" width="10" height="9" viewBox="0 0 10 9"><path d="M9 1L1 9M9 4L4 9M9 7L7 9" stroke="#8a9094" stroke-width="0.8"/></svg>
<div class="a" style="left:0px;top:507px;width:700px;height:1px;background:#6c7276;"></div>
<div class="a" style="left:1px;top:509px;width:28px;height:11px;border-top:1px solid #666c70;border-left:1px solid #666c70;border-right:1px solid #25292b;border-bottom:1px solid #25292b"></div>
<svg class="a" style="left:3px;top:510px" width="8" height="8" viewBox="0 0 8 8"><rect x="0" y="0" width="3.5" height="3.5" fill="#f05020"/><rect x="4" y="0.5" width="3.5" height="3.5" fill="#50b030"/><rect x="0" y="4" width="3.5" height="3.5" fill="#2060e0"/><rect x="4" y="4.5" width="3.5" height="3.5" fill="#f0c020"/></svg>
<div class="t" style="left:12px;top:510.61px;font-size:7px;line-height:8px;font-weight:bold;color:#111;transform:scaleX(0.941);transform-origin:0 0;">Start</div>
<div class="a" style="left:33px;top:509px;width:1px;height:12px;background:#6c7276;"></div>
<svg class="a" style="left:39px;top:510px" width="8" height="8" viewBox="0 0 8 8"><path d="M0.5 2h3l1 1h3v5h-7z" fill="#e8c050"/><rect x="1.5" y="4" width="5" height="3" fill="#a0d0f0"/></svg>
<svg class="a" style="left:51px;top:510px" width="8" height="8" viewBox="0 0 8 8"><path d="M6 0L1 5h3l-2 3 5-5H4z" fill="#f0a020"/></svg>
<svg class="a" style="left:64px;top:510px" width="8" height="8" viewBox="0 0 8 8"><circle cx="4" cy="4" r="3.8" fill="#d02020"/><circle cx="4" cy="4" r="2" fill="#f8e0c0"/></svg>
<svg class="a" style="left:76px;top:510px" width="8" height="8" viewBox="0 0 8 8"><ellipse cx="4" cy="4.5" rx="3.5" ry="2.5" fill="#111"/><circle cx="4" cy="4.5" r="1.3" fill="#2040e0"/></svg>
<svg class="a" style="left:89px;top:510px" width="8" height="8" viewBox="0 0 8 8"><rect x="0.5" y="0.5" width="7" height="7" rx="1" fill="#3070d0"/><rect x="2" y="2" width="4" height="4" fill="#e0f0ff"/></svg>
<svg class="a" style="left:101px;top:510px" width="8" height="8" viewBox="0 0 8 8"><circle cx="4" cy="4" r="3.5" fill="#f0f0f0"/><circle cx="4" cy="4" r="2" fill="#2060c0"/></svg>
<svg class="a" style="left:114px;top:510px" width="8" height="8" viewBox="0 0 8 8"><circle cx="4" cy="4" r="3.8" fill="#e86010"/><circle cx="4.5" cy="3.5" r="2.2" fill="#3050a0"/></svg>
<svg class="a" style="left:126px;top:510px" width="8" height="8" viewBox="0 0 8 8"><circle cx="4" cy="4" r="3.8" fill="#30a040"/><circle cx="4" cy="4" r="2" fill="#d0f0d0"/></svg>
<svg class="a" style="left:139px;top:510px" width="8" height="8" viewBox="0 0 8 8"><rect x="0" y="1" width="8" height="6" fill="#222"/><text x="4" y="6" font-size="4" text-anchor="middle" fill="#fff" font-family="Liberation Sans">CN</text></svg>
<svg class="a" style="left:151px;top:510px" width="8" height="8" viewBox="0 0 8 8"><circle cx="4" cy="4.5" r="3" fill="none" stroke="#3080e0" stroke-width="1.6"/><path d="M0 6q4-6 8-4" stroke="#f0c020" stroke-width="0.8" fill="none"/></svg>
<div class="a" style="left:180px;top:509px;width:1px;height:12px;background:#6c7276;"></div>
<div class="a" style="left:184px;top:508px;width:25px;height:12px;border-top:1px solid #666c70;border-left:1px solid #666c70;border-right:1px solid #25292b;border-bottom:1px solid #25292b"></div>
<svg class="a" style="left:187px;top:510px" width="8" height="8" viewBox="0 0 8 8"><circle cx="3" cy="3" r="1.8" fill="#3070e0"/><circle cx="5.5" cy="5" r="2.2" fill="#40c040"/></svg>
<div class="t" style="left:196px;top:510.11px;font-size:7px;line-height:8px;color:#15181a;transform:scaleX(0.913);transform-origin:0 0;">W...</div>
<div class="a" style="left:211px;top:508px;width:25px;height:12px;border-top:1px solid #666c70;border-left:1px solid #666c70;border-right:1px solid #25292b;border-bottom:1px solid #25292b"></div>
<svg class="a" style="left:214px;top:510px" width="8" height="8" viewBox="0 0 8 8"><circle cx="4" cy="4" r="3.8" fill="#e86010"/><circle cx="4.5" cy="3.6" r="2.3" fill="#2a48a0"/></svg>
<div class="t" style="left:223px;top:510.11px;font-size:7px;line-height:8px;color:#15181a;transform:scaleX(1.179);transform-origin:0 0;">F...</div>
<div class="a" style="left:238px;top:508px;width:25px;height:12px;border-top:1px solid #666c70;border-left:1px solid #666c70;border-right:1px solid #25292b;border-bottom:1px solid #25292b"></div>
<svg class="a" style="left:241px;top:510px" width="8" height="8" viewBox="0 0 8 8"><path d="M0.5 2h3l1 1h3v5h-7z" fill="#e8c050"/></svg>
<div class="t" style="left:250px;top:510.11px;font-size:7px;line-height:8px;color:#15181a;transform:scaleX(0.943);transform-origin:0 0;">m...</div>
<div class="a" style="left:264px;top:508px;width:25px;height:12px;border-top:1px solid #666c70;border-left:1px solid #666c70;border-right:1px solid #25292b;border-bottom:1px solid #25292b"></div>
<svg class="a" style="left:267px;top:510px" width="8" height="8" viewBox="0 0 8 8"><rect x="0" y="1" width="8" height="6" fill="#c040c0"/><rect x="1" y="3" width="6" height="2" fill="#fff"/></svg>
<div class="t" style="left:276px;top:510.11px;font-size:7px;line-height:8px;color:#15181a;transform:scaleX(1.179);transform-origin:0 0;">T...</div>
<div class="a" style="left:291px;top:508px;width:25px;height:12px;border-top:1px solid #666c70;border-left:1px solid #666c70;border-right:1px solid #25292b;border-bottom:1px solid #25292b"></div>
<svg class="a" style="left:294px;top:510px" width="8" height="8" viewBox="0 0 8 8"><circle cx="4" cy="4" r="3.8" fill="#e86010"/><circle cx="4.5" cy="3.6" r="2.3" fill="#2a48a0"/></svg>
<div class="t" style="left:303px;top:510.11px;font-size:7px;line-height:8px;color:#15181a;transform:scaleX(1.414);transform-origin:0 0;">I...</div>
<div class="a" style="left:318px;top:508px;width:25px;height:12px;border-top:1px solid #666c70;border-left:1px solid #666c70;border-right:1px solid #25292b;border-bottom:1px solid #25292b"></div>
<svg class="a" style="left:321px;top:510px" width="8" height="8" viewBox="0 0 8 8"><rect x="1" y="0.5" width="6" height="7" fill="#f0f0f0"/><path d="M1 7l5-5v5z" fill="#e0a020"/></svg>
<div class="t" style="left:330px;top:510.11px;font-size:7px;line-height:8px;color:#15181a;transform:scaleX(1.047);transform-origin:0 0;">A...</div>
<div class="a" style="left:345px;top:508px;width:25px;height:12px;border-top:1px solid #666c70;border-left:1px solid #666c70;border-right:1px solid #25292b;border-bottom:1px solid #25292b"></div>
<svg class="a" style="left:348px;top:510px" width="8" height="8" viewBox="0 0 8 8"><circle cx="4" cy="4" r="3.5" fill="#f08020"/></svg>
<div class="t" style="left:357px;top:510.11px;font-size:7px;line-height:8px;color:#15181a;transform:scaleX(1.047);transform-origin:0 0;">B...</div>
<div class="a" style="left:372px;top:508px;width:25px;height:12px;border-top:1px solid #666c70;border-left:1px solid #666c70;border-right:1px solid #25292b;border-bottom:1px solid #25292b"></div>
<svg class="a" style="left:375px;top:510px" width="8" height="8" viewBox="0 0 8 8"><rect x="1" y="0.5" width="6" height="7" fill="#6060d0"/><rect x="2" y="2" width="4" height="4" fill="#fff"/></svg>
<div class="t" style="left:384px;top:510.11px;font-size:7px;line-height:8px;color:#15181a;">R...</div>
<div class="a" style="left:399px;top:508px;width:25px;height:12px;border-top:1px solid #666c70;border-left:1px solid #666c70;border-right:1px solid #25292b;border-bottom:1px solid #25292b"></div>
<svg class="a" style="left:402px;top:510px" width="8" height="8" viewBox="0 0 8 8"><circle cx="4" cy="4" r="3.8" fill="#e86010"/><circle cx="4.5" cy="3.6" r="2.3" fill="#2a48a0"/></svg>
<div class="t" style="left:411px;top:510.11px;font-size:7px;line-height:8px;color:#15181a;transform:scaleX(1.131);transform-origin:0 0;">L...</div>
<div class="a" style="left:426px;top:508px;width:25px;height:12px;background:#565c60;border-top:1px solid #25292b;border-left:1px solid #25292b;border-right:1px solid #7a8084;border-bottom:1px solid #7a8084"></div>
<svg class="a" style="left:429px;top:510px" width="8" height="8" viewBox="0 0 8 8"><circle cx="4" cy="4" r="3.8" fill="#3a8ad8"/><text x="4" y="6.5" font-size="7" text-anchor="middle" fill="#fff" font-family="Liberation Sans" font-weight="bold">2</text></svg>
<div class="t" style="left:438px;top:510.11px;font-size:7px;line-height:8px;color:#15181a;transform:scaleX(1.414);transform-origin:0 0;">r...</div>
<div class="a" style="left:452px;top:508px;width:25px;height:12px;border-top:1px solid #666c70;border-left:1px solid #666c70;border-right:1px solid #25292b;border-bottom:1px solid #25292b"></div>
<svg class="a" style="left:455px;top:510px" width="8" height="8" viewBox="0 0 8 8"><rect x="0" y="0" width="8" height="8" fill="#b02020"/><text x="4" y="6.5" font-size="6" text-anchor="middle" fill="#f0c020" font-family="Liberation Sans" font-weight="bold">FZ</text></svg>
<div class="t" style="left:464px;top:510.11px;font-size:7px;line-height:8px;color:#15181a;transform:scaleX(1.179);transform-origin:0 0;">F...</div>
<div class="a" style="left:479px;top:508px;width:25px;height:12px;border-top:1px solid #666c70;border-left:1px solid #666c70;border-right:1px solid #25292b;border-bottom:1px solid #25292b"></div>
<svg class="a" style="left:482px;top:510px" width="8" height="8" viewBox="0 0 8 8"><circle cx="4" cy="4" r="3.8" fill="#e86010"/><circle cx="4.5" cy="3.6" r="2.3" fill="#2a48a0"/></svg>
<div class="t" style="left:491px;top:510.11px;font-size:7px;line-height:8px;color:#15181a;">G...</div>
<div class="a" style="left:506px;top:508px;width:25px;height:12px;border-top:1px solid #666c70;border-left:1px solid #666c70;border-right:1px solid #25292b;border-bottom:1px solid #25292b"></div>
<svg class="a" style="left:509px;top:510px" width="8" height="8" viewBox="0 0 8 8"><rect x="0.5" y="0.5" width="7" height="7" fill="#e0e0e0"/><circle cx="4" cy="5" r="2" fill="#d02020"/></svg>
<div class="t" style="left:518px;top:510.11px;font-size:7px;line-height:8px;color:#15181a;">U...</div>
<div class="a" style="left:533px;top:508px;width:25px;height:12px;border-top:1px solid #666c70;border-left:1px solid #666c70;border-right:1px solid #25292b;border-bottom:1px solid #25292b"></div>
<svg class="a" style="left:536px;top:510px" width="8" height="8" viewBox="0 0 8 8"><circle cx="4" cy="4" r="3.8" fill="#e86010"/><circle cx="4.5" cy="3.6" r="2.3" fill="#2a48a0"/></svg>
<div class="t" style="left:545px;top:510.11px;font-size:7px;line-height:8px;color:#15181a;transform:scaleX(1.179);transform-origin:0 0;">F...</div>
<div class="a" style="left:560px;top:508px;width:25px;height:12px;border-top:1px solid #666c70;border-left:1px solid #666c70;border-right:1px solid #25292b;border-bottom:1px solid #25292b"></div>
<svg class="a" style="left:563px;top:510px" width="8" height="8" viewBox="0 0 8 8"><rect x="0" y="1" width="4" height="6" fill="#d02020"/><rect x="4" y="0" width="4" height="5" fill="#2040d0"/><circle cx="5" cy="6" r="2" fill="#f0c020"/></svg>
<div class="t" style="left:572px;top:510.11px;font-size:7px;line-height:8px;color:#15181a;transform:scaleX(0.943);transform-origin:0 0;">m...</div>
<div class="a" style="left:591px;top:509px;width:1px;height:12px;background:#6c7276;"></div>
<div class="a" style="left:595px;top:510px;width:9px;height:9px;background:#2040a0;"></div>
<div class="t" style="left:596px;top:510.74px;font-size:6px;line-height:7px;font-weight:bold;color:#ddd;transform:scaleX(0.954);transform-origin:0 0;">Sv</div>
<div class="t" style="left:609px;top:510.61px;font-size:7px;line-height:8px;color:#222;">«</div>
<svg class="a" style="left:617px;top:510px" width="9" height="9" viewBox="0 0 9 9"><path d="M6 0L1 5h3l-2 3 5-5H4z" fill="#f0a020"/></svg>
<svg class="a" style="left:626px;top:510px" width="9" height="9" viewBox="0 0 9 9"><circle cx="4" cy="2.5" r="2" fill="#40c040"/><ellipse cx="4" cy="7" rx="3.5" ry="2" fill="#40c040"/></svg>
<svg class="a" style="left:635px;top:510px" width="9" height="9" viewBox="0 0 9 9"><path d="M0.5 1h7v3q0 3-3.5 4q-3.5-1-3.5-4z" fill="#f0d020" stroke="#3050a0" stroke-width="0.7"/></svg>
<svg class="a" style="left:645px;top:510px" width="9" height="9" viewBox="0 0 9 9"><circle cx="4" cy="4" r="3.5" fill="#e8e8e8"/></svg>
<svg class="a" style="left:654px;top:510px" width="9" height="9" viewBox="0 0 9 9"><ellipse cx="4" cy="4" rx="4" ry="3.5" fill="#111"/><circle cx="4" cy="4" r="1.6" fill="#3050e0"/></svg>
<svg class="a" style="left:664px;top:510px" width="9" height="9" viewBox="0 0 9 9"><rect x="0" y="0" width="9" height="9" fill="#e02020"/><path d="M2 8l3-6 2 6" stroke="#fff" stroke-width="1.2" fill="none"/></svg>
<div class="t" style="left:677px;top:510.61px;font-size:7px;line-height:8px;color:#15181a;transform:scaleX(0.828);transform-origin:0 0;">17:56</div>
</body></html>
